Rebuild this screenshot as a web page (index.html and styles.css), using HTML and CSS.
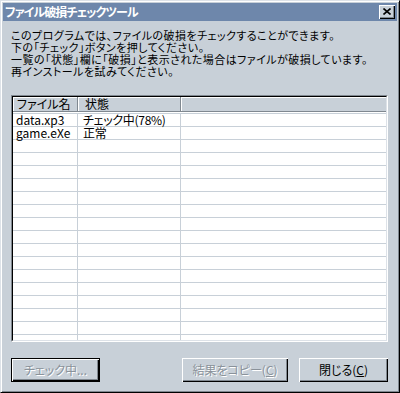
FILE: index.html
```html
<!DOCTYPE html>
<html lang="ja">
<head>
  <meta charset="UTF-8">
  <title>ファイル破損チェックツール</title>
  <link rel="stylesheet" href="styles.css">
</head>
<body>
  <div class="window">
    <div class="titlebar">
      <span class="title">ファイル破損チェックツール</span>
      <span class="close">
        <svg width="8" height="7" viewBox="0 0 8 7"><path d="M0.5 0.5 L7.5 6.5 M7.5 0.5 L0.5 6.5" stroke="#000" stroke-width="1.6" fill="none"/></svg>
      </span>
    </div>
    <div class="client">
      <div class="intro">
        <div class="line">このプログラムでは、ファイルの破損をチェックすることができます。</div>
        <div class="line">下の「チェック」ボタンを押してください。</div>
        <div class="line">一覧の「状態」欄に「破損」と表示された場合はファイルが破損しています。</div>
        <div class="line">再インストールを試みてください。</div>
      </div>

      <div class="list">
        <div class="list-inner">
          <div class="list-head">
            <div class="hcell c1">ファイル名</div>
            <div class="hcell c2">状態</div>
            <div class="hcell c3"></div>
          </div>
          <div class="list-body">
            <div class="row"><div class="cell">data.xp3</div><div class="cell">チェック中(78%)</div><div class="cell"></div></div>
            <div class="row"><div class="cell">game.eXe</div><div class="cell">正常</div><div class="cell"></div></div>
            <div class="row"><div class="cell"></div><div class="cell"></div><div class="cell"></div></div>
            <div class="row"><div class="cell"></div><div class="cell"></div><div class="cell"></div></div>
            <div class="row"><div class="cell"></div><div class="cell"></div><div class="cell"></div></div>
            <div class="row"><div class="cell"></div><div class="cell"></div><div class="cell"></div></div>
            <div class="row"><div class="cell"></div><div class="cell"></div><div class="cell"></div></div>
            <div class="row"><div class="cell"></div><div class="cell"></div><div class="cell"></div></div>
            <div class="row"><div class="cell"></div><div class="cell"></div><div class="cell"></div></div>
            <div class="row"><div class="cell"></div><div class="cell"></div><div class="cell"></div></div>
            <div class="row"><div class="cell"></div><div class="cell"></div><div class="cell"></div></div>
            <div class="row"><div class="cell"></div><div class="cell"></div><div class="cell"></div></div>
            <div class="row"><div class="cell"></div><div class="cell"></div><div class="cell"></div></div>
            <div class="row"><div class="cell"></div><div class="cell"></div><div class="cell"></div></div>
            <div class="row"><div class="cell"></div><div class="cell"></div><div class="cell"></div></div>
            <div class="row"><div class="cell"></div><div class="cell"></div><div class="cell"></div></div>
            <div class="row"><div class="cell"></div><div class="cell"></div><div class="cell"></div></div>
            <div class="row"><div class="cell"></div><div class="cell"></div><div class="cell"></div></div>
            <div class="row"><div class="cell"></div><div class="cell"></div><div class="cell"></div></div>
          </div>
        </div>
      </div>

      <div class="buttons">
        <button class="btn btn-check default" disabled>チェック中...</button>
        <button class="btn btn-copy" disabled>結果をコピー(<u>C</u>)</button>
        <button class="btn btn-close">閉じる(<u>C</u>)</button>
      </div>
    </div>
  </div>
</body>
</html>
```

FILE: styles.css
```css
body {
  margin: 0;
  font-family: "Noto Sans CJK JP", sans-serif;
  font-size: 12px;
  font-feature-settings: "palt";
  color: #000;
  background: #c8d0d8;
}
.window {
  width: 400px;
  height: 393px;
  box-sizing: border-box;
  background: #c8d0d8; /* dialog face */
  border: 1px solid;
  border-color: #dde2e8 #000 #000 #dde2e8;
  box-shadow: inset 1px 1px #fff, inset -1px -1px #808890;
  padding: 2px;
  display: flex;
  flex-direction: column;
}
.titlebar {
  height: 18px;
  background: #6e87ab; /* steel blue caption */
  color: #fff;
  font-weight: bold;
  display: flex;
  align-items: center;
  justify-content: space-between;
  padding: 0 2px 0 2px;
}
.title {
  line-height: 18px;
  letter-spacing: -0.9px;
}
.close {
  width: 16px;
  height: 14px;
  box-sizing: border-box;
  background: #c8d0d8;
  box-shadow: inset 1px 1px #fff, inset -1px -1px #000, inset -2px -2px #808890;
  display: flex;
  align-items: center;
  justify-content: center;
  padding: 0 1px 1px 0;
}
.client {
  flex: 1;
  padding: 8px 9px 0 8px;
  display: flex;
  flex-direction: column;
}
.intro {
  font-size: 11px;
  letter-spacing: 0.45px;
}
.line {
  height: 12px;
  line-height: 12px;
  white-space: nowrap;
}
.list {
  margin-top: 18px;
  width: 377px;
  height: 247px;
  box-sizing: border-box;
  border: 1px solid;
  border-color: #808890 #fff #fff #808890;
}
.list-inner {
  height: 100%;
  box-sizing: border-box;
  border: 1px solid;
  border-color: #000 #dde2e8 #dde2e8 #000;
  background: #fff;
  overflow: hidden;
}
.list-head {
  display: grid;
  grid-template-columns: 65px 103px 1fr;
  height: 15px;
}
.hcell {
  background: #c8d0d8;
  box-sizing: border-box;
  border-right: 1px solid #808890;
  border-bottom: 1px solid #808890;
  box-shadow: inset 1px 1px #fff;
  line-height: 14px;
  padding-left: 4px;
  white-space: nowrap;
}
.hcell.c2 {
  padding-left: 7px;
}
.hcell.c3 {
  border-right: none;
}
.list-body {
  padding-top: 1px;
}
.row {
  display: grid;
  grid-template-columns: 65px 103px 1fr;
  height: 13px;
  box-sizing: border-box;
  border-top: 1px solid #c8d0d8;
}
.cell {
  border-right: 1px solid #c8d0d8;
  line-height: 12px;
  padding-left: 3px;
  white-space: nowrap;
}
.cell:nth-child(2) {
  padding-left: 5px;
  letter-spacing: -0.3px;
}
.cell:last-child {
  border-right: none;
}
.buttons {
  margin-top: 16px;
  display: flex;
  gap: 11px;
}
.btn {
  height: 24px;
  box-sizing: border-box;
  padding: 0 0 1px 0;
  border: none;
  background: #c8d0d8;
  font: inherit;
  font-feature-settings: "palt";
  color: #000;
  box-shadow: inset 1px 1px #fff, inset -1px -1px #000, inset -2px -2px #808890;
}
.btn:disabled {
  color: #8a929a;
  text-shadow: 1px 1px #fff;
}
.btn.default {
  border: 1px solid #000;
}
.btn-check {
  width: 89px;
}
.btn-copy {
  width: 106px;
  margin-left: auto;
}
.btn-close {
  width: 89px;
}
```
